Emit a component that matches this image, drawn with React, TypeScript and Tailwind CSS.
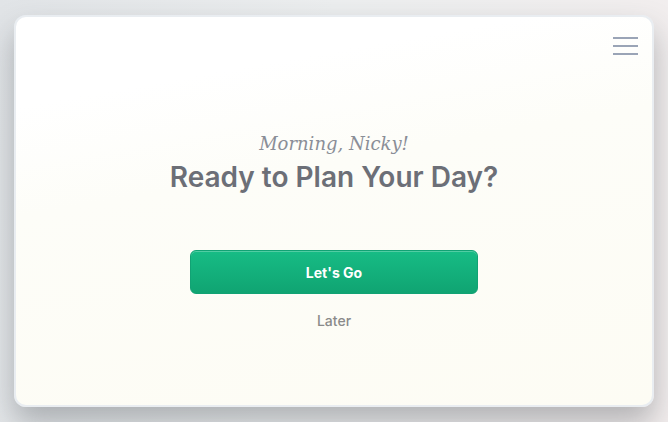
import React from 'react';

export default function App() {
  return (
    <div className="h-[422px] w-full bg-[linear-gradient(100deg,#e1e4e7_0%,#eceeef_45%,#f3eeee_100%)] px-[14px] pt-[15px] pb-[15px]">
      <div className="flex h-full flex-col rounded-[12px] border-2 border-[#e9edf1] bg-[linear-gradient(170deg,#ffffff_0%,#ffffff_18%,#fdfdf8_40%,#fdfcf4_100%)] shadow-[0_16px_30px_rgba(60,64,70,0.34)]">
        <div className="flex justify-end pt-[18px] pr-[14px]">
          <button className="flex w-[25px] flex-col gap-[6px] py-[2px]" aria-label="Menu">
            <span className="block h-[2px] w-full bg-[#9aa4b6]" />
            <span className="block h-[2px] w-full bg-[#9aa4b6]" />
            <span className="block h-[2px] w-full bg-[#9aa4b6]" />
          </button>
        </div>
        <div className="mt-[74px] flex flex-col items-center">
          <p className="font-['DejaVu_Serif',serif] text-[18px] italic leading-[26px] text-[#8a8e97]">
            Morning, Nicky!
          </p>
          <h1 className="mt-[3px] font-['Inter',sans-serif] text-[28px] font-semibold leading-[34px] text-[#6c6f77]">
            Ready to Plan Your Day?
          </h1>
          <button className="mt-[56px] h-[44px] w-[288px] rounded-[6px] border border-[#12a274] bg-[linear-gradient(180deg,#17bc85_0%,#10a472_100%)] font-['Inter',sans-serif] text-[14px] font-bold text-white shadow-[inset_0_1px_0_rgba(255,255,255,0.25)]">
            Let's Go
          </button>
          <button className="mt-[16px] font-['Inter',sans-serif] text-[14px] font-medium text-[#8a8a8a]">
            Later
          </button>
        </div>
      </div>
    </div>
  );
}
